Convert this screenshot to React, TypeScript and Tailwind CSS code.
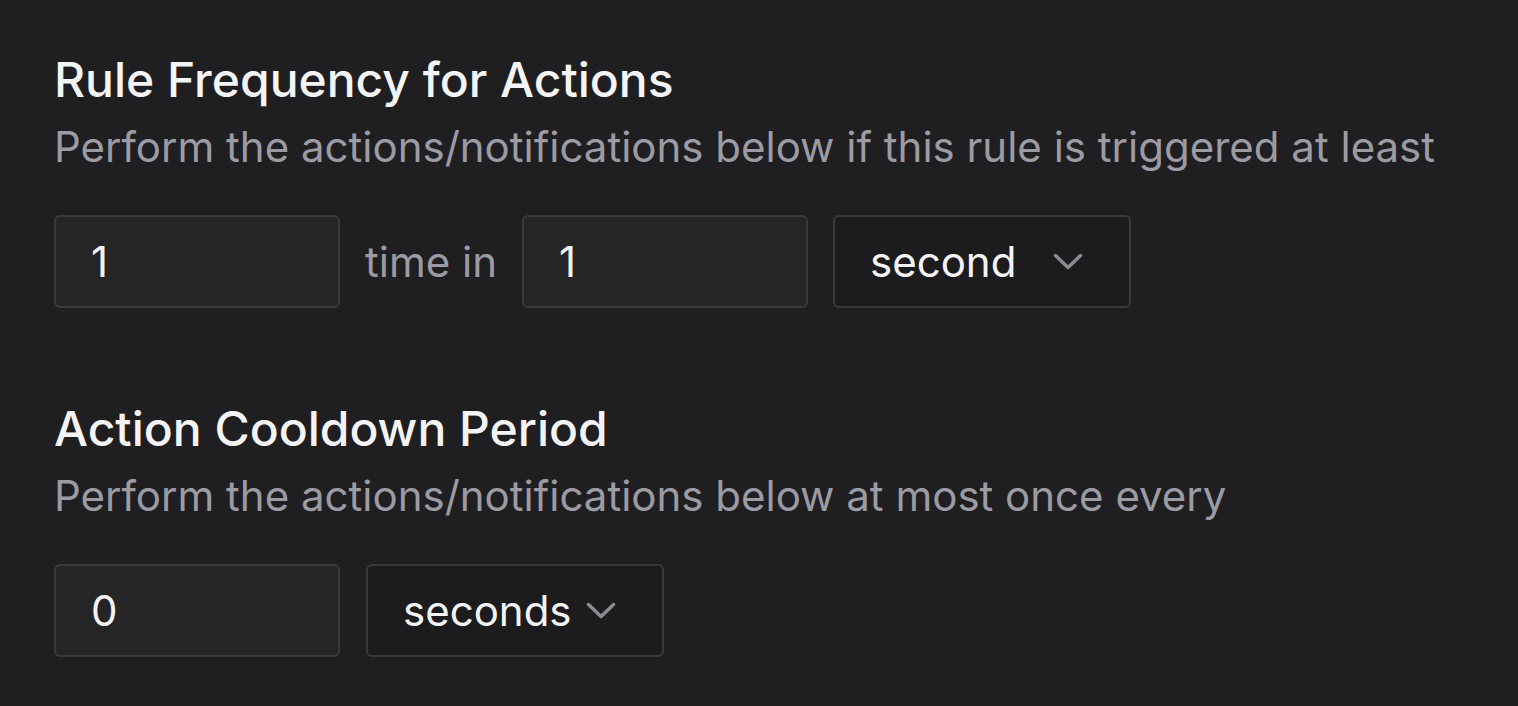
function NumberBox({ value }: { value: string }) {
    return (
        <div className="flex h-[93px] w-[286px] items-center rounded-[6px] border-2 border-[#3a3a3e] bg-[#252528] pl-[35px] text-[42px] text-[#f4f4f5]">
            {value}
        </div>
    );
}

function UnitSelect({ value }: { value: string }) {
    return (
        <div className="flex h-[93px] w-[298px] items-center justify-between gap-[12px] rounded-[6px] border-2 border-[#3a3a3e] bg-[#1c1c1f] pl-[35px] pr-[46px] text-[42px] text-[#f4f4f5]">
            <span>{value}</span>
            <svg width="30" height="17" viewBox="0 0 30 17" fill="none" className="shrink-0">
                <polyline points="2.5,2.5 15,14.5 27.5,2.5" stroke="#8b8b91" strokeWidth="3.5" strokeLinecap="round" strokeLinejoin="round" />
            </svg>
        </div>
    );
}

export default function App() {
    return (
        <div className="min-h-screen bg-[#1f1f22] px-[54px] pt-[52px] font-['Inter',sans-serif]">
            <section>
                <h2 className="text-[48px] font-medium leading-[56px] text-[#f4f4f5]">Rule Frequency for Actions</h2>
                <p className="mt-[14px] text-[42px] leading-[50px] text-[#9c9ba3]">
                    Perform the actions/notifications below if this rule is triggered at least
                </p>
                <div className="mt-[43px] flex items-center gap-[25px]">
                    <NumberBox value="1" />
                    <span className="text-[42px] text-[#9c9ba3]">time in</span>
                    <NumberBox value="1" />
                    <UnitSelect value="second" />
                </div>
            </section>
            <section className="mt-[93px]">
                <h2 className="text-[48px] font-medium leading-[56px] text-[#f4f4f5]">Action Cooldown Period</h2>
                <p className="mt-[14px] text-[42px] leading-[50px] text-[#9c9ba3]">
                    Perform the actions/notifications below at most once every
                </p>
                <div className="mt-[43px] flex items-center gap-[26px]">
                    <NumberBox value="0" />
                    <UnitSelect value="seconds" />
                </div>
            </section>
        </div>
    );
}
